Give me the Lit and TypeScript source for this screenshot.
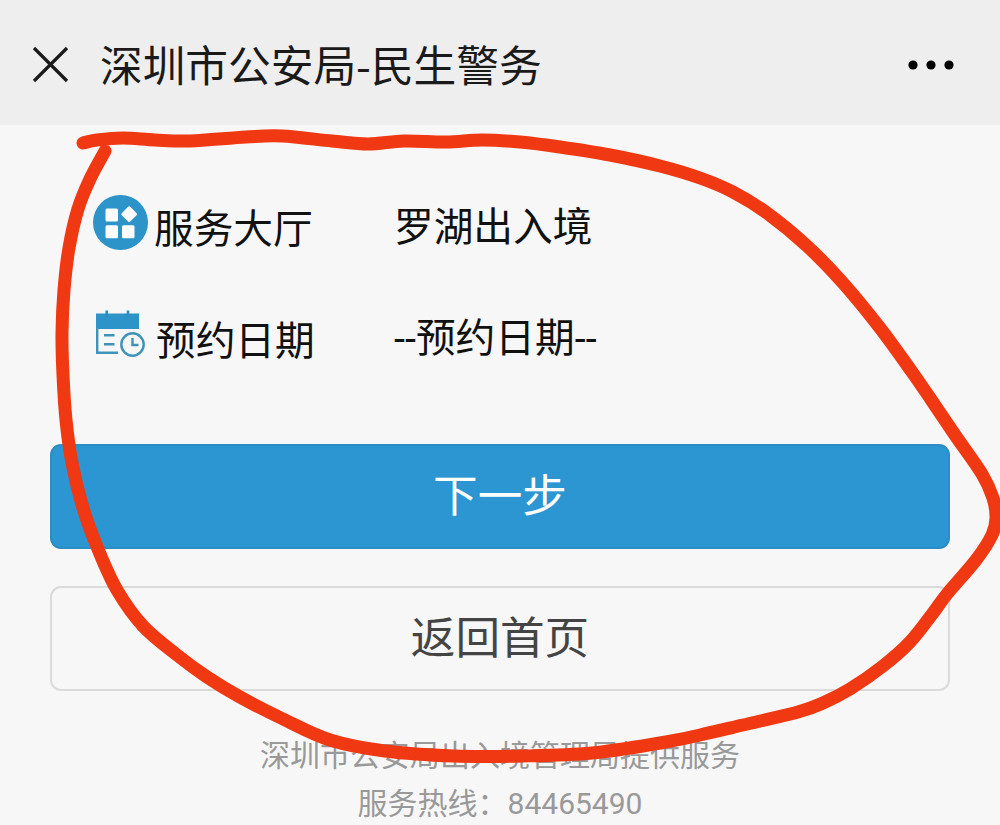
import { LitElement, html, css, svg } from 'lit';
import { customElement, property } from 'lit/decorators.js';

type Point = [number, number];

// Hand-drawn marker stroke, clockwise from the top left
const MARKER_POINTS: Point[] = [
  [83, 143], [97, 140], [123, 138], [155, 140], [190, 141], [246, 137], [282, 136],
  [332, 141], [368, 144], [404, 141], [446, 142], [482, 140], [520, 142], [560, 147],
  [610, 155], [660, 166], [700, 178], [733, 192], [767, 213], [807, 246], [843, 283],
  [880, 328], [912, 372], [932, 401], [955, 435], [982, 474], [993, 498], [996, 518],
  [992, 535], [976, 560], [947, 594], [933, 613], [910, 642], [883, 666], [850, 689],
  [823, 703], [798, 712], [743, 725], [700, 735], [660, 743], [592, 753], [523, 756],
  [454, 756], [385, 751], [330, 740], [283, 719], [240, 697], [207, 677], [177, 655],
  [143, 626], [117, 590], [98, 549], [83, 508], [72, 463], [66, 420], [63, 375],
  [62, 333], [64, 290], [69, 248], [78, 209], [90, 179], [105, 151],
];

/** Smooth path through all the points (Catmull-Rom to bezier) */
function smoothPath(points: Point[]): string {
  let d = `M${points[0][0]} ${points[0][1]}`;
  for (let i = 0; i < points.length - 1; i++) {
    const p0 = points[i - 1] ?? points[i];
    const p1 = points[i];
    const p2 = points[i + 1];
    const p3 = points[i + 2] ?? p2;
    d += `C${p1[0] + (p2[0] - p0[0]) / 6} ${p1[1] + (p2[1] - p0[1]) / 6}`;
    d += ` ${p2[0] - (p3[0] - p1[0]) / 6} ${p2[1] - (p3[1] - p1[1]) / 6}`;
    d += ` ${p2[0]} ${p2[1]}`;
  }
  return d;
}

const hallIcon = svg`
  <circle cx="27.5" cy="27.5" r="27.5" fill="#2c94c9" />
  <g fill="#fff">
    <rect x="12.5" y="13.5" width="12.5" height="13" rx="1.5" />
    <rect x="12.5" y="30.3" width="12.5" height="13" rx="1.5" />
    <rect x="29" y="30.3" width="12.5" height="13" rx="1.5" />
    <rect x="30.2" y="13.2" width="12" height="12" rx="1.5" transform="rotate(45 36.2 19.2)" />
  </g>
`;

const dateIcon = svg`
  <path d="M3 7.5h43v15.5H3z" fill="#2c94c9" />
  <path d="M13.7 4.5v6M35 4.5v6" stroke="#2c8fbf" stroke-width="2.6" />
  <g fill="none" stroke="#3d93b9" stroke-width="2.4">
    <path d="M4.2 22v24.8H25M11 29.2h10.5M11 38.2h10.5" />
    <circle cx="39.5" cy="38.5" r="11.2" />
    <path d="M39.5 32V39H45.5" />
  </g>
`;

@customElement('app-field')
export class AppField extends LitElement {
  static styles = css`
    :host {
      display: grid;
      grid-template-columns: 61px 240px 1fr;
      align-items: start;
      height: 111px;
      font-size: 39.7px;
      line-height: 58px;
      color: #111;
      white-space: nowrap;
    }

    .icon {
      display: block;
      width: 55px;
      height: 55px;
    }

    .label {
      padding-top: 6px;
    }

    .label--shifted {
      padding: 7px 0 0 2px;
    }

    .value {
      padding-top: 4px;
    }
  `;

  @property({ type: String })
  icon: 'hall' | 'date' = 'hall';

  @property({ type: String })
  label = '';

  @property({ type: String })
  value = '';

  render() {
    return html`
      <svg class="icon" viewBox="0 0 55 55">${this.icon === 'hall' ? hallIcon : dateIcon}</svg>
      <span class=${this.icon === 'date' ? 'label label--shifted' : 'label'}>${this.label}</span>
      <span class="value">${this.value}</span>
    `;
  }
}

@customElement('app-root')
export class AppRoot extends LitElement {
  static styles = css`
    :host {
      display: block;
      position: relative;
      width: 1000px;
      height: 825px;
      overflow: hidden;
      background: #f7f7f7;
      font-family: Roboto, 'Noto Sans CJK SC', sans-serif;
    }

    .header {
      display: flex;
      align-items: center;
      box-sizing: border-box;
      height: 125px;
      padding: 4px 46px 0 32px;
      background: #eee;
    }

    .close {
      width: 37px;
      height: 37px;
    }

    .title {
      flex: 1;
      margin: 0 0 3px 31px;
      font-family: 'Noto Sans CJK SC', sans-serif;
      font-size: 42.7px;
      font-weight: 400;
      line-height: 60px;
      color: #1a1a1a;
    }

    .more {
      width: 46px;
      height: 10px;
    }

    .fields {
      height: 249px;
      padding: 70px 0 0 93px;
    }

    .actions {
      display: flex;
      flex-direction: column;
      gap: 37px;
      padding: 0 50px;
    }

    .button {
      box-sizing: border-box;
      height: 105px;
      padding: 0;
      border: 2px solid #dadada;
      border-radius: 11px;
      background: transparent;
      font-family: inherit;
      font-size: 44.6px;
      line-height: 100px;
      color: #444;
    }

    .button--primary {
      border-color: #2a8dc3;
      background: #2b96d1;
      color: #fff;
    }

    .footer {
      padding-top: 41px;
      font-size: 30px;
      line-height: 48px;
      text-align: center;
      color: #999;
    }

    .marker {
      position: absolute;
      inset: 0;
      pointer-events: none;
    }
  `;

  render() {
    return html`
      <header class="header">
        <svg class="close" viewBox="0 0 37 37">
          <path d="M2 2L35 35M35 2L2 35" stroke="#1a1a1a" stroke-width="3.2" />
        </svg>
        <h1 class="title">深圳市公安局-民生警务</h1>
        <svg class="more" viewBox="0 0 46 10">
          <circle cx="5" cy="5" r="4.6" />
          <circle cx="23" cy="5" r="4.6" />
          <circle cx="41" cy="5" r="4.6" />
        </svg>
      </header>
      <div class="fields">
        <app-field icon="hall" label="服务大厅" value="罗湖出入境"></app-field>
        <app-field icon="date" label="预约日期" value="--预约日期--"></app-field>
      </div>
      <div class="actions">
        <button class="button button--primary">下一步</button>
        <button class="button">返回首页</button>
      </div>
      <footer class="footer">
        <div>深圳市公安局出入境管理局提供服务</div>
        <div>服务热线：84465490</div>
      </footer>
      <svg class="marker" width="1000" height="825" viewBox="0 0 1000 825">
        <path
          d=${smoothPath(MARKER_POINTS)}
          fill="none"
          stroke="#f03812"
          stroke-width="13"
          stroke-linecap="round"
          stroke-linejoin="round"
        />
      </svg>
    `;
  }
}

declare global {
  interface HTMLElementTagNameMap {
    'app-field': AppField;
    'app-root': AppRoot;
  }
}
